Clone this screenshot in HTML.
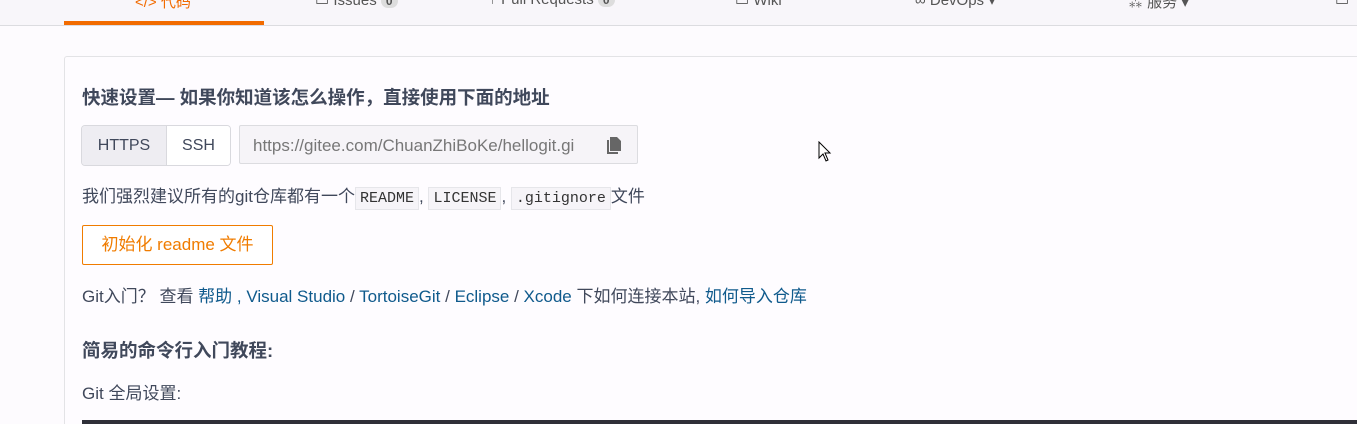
<!DOCTYPE html>
<html><head><meta charset="utf-8"><style>
html,body{margin:0;width:1357px;height:424px;overflow:hidden}
body{background:#fdfbfe;font-family:"Liberation Sans","Noto Sans CJK SC",sans-serif;color:#40485b;position:relative}
.nav{position:absolute;left:0;top:0;width:1357px;height:25px;background:#f8f6fa;border-bottom:1px solid #dcdce0}
.nav span{position:absolute;top:-9px;font-size:15px;color:#555}
.ul{position:absolute;left:64px;top:21px;width:200px;height:4px;background:#f26b00}
.card{position:absolute;left:64px;top:56px;width:1300px;height:368px;border-left:1px solid #e3e3e6;border-top:1px solid #e3e3e6;border-radius:3px 0 0 0;background:#fefcff}
.a{position:absolute;white-space:nowrap}
h{font-weight:bold;font-size:18.5px;color:#40485b}
.grp{position:absolute;left:81px;top:125px;width:148px;height:39px;border:1px solid #d9d9de;border-radius:4px;overflow:hidden;font-size:16px}
.grp div{position:absolute;top:0;height:39px;line-height:39px;text-align:center}
.inp{position:absolute;left:239px;top:125px;width:399px;height:39px;border:1px solid #dcdce0;border-radius:2px;background:#f6f4f8;font-size:17px;color:#777;line-height:39px;padding-left:13px;box-sizing:border-box}
code{font-family:"Liberation Mono",monospace;font-size:15px;background:#f6f4f8;border:1px solid #e6e6ea;padding:2px 4px;color:#333}
.btn{position:absolute;left:82px;top:225px;width:189px;height:38px;border:1px solid #f07c00;border-radius:2px;color:#f07c00;font-size:17px;line-height:38px;text-align:center;background:#fff}
.l{color:#0f5a8c}
</style></head><body>
<div class="nav">
<span style="left:135px;color:#f26b00">&lt;/&gt; 代码</span>
<span style="left:315px">▭ Issues <b style="background:#ddd;border-radius:8px;padding:0 5px;font-size:12px">0</b></span>
<span style="left:488px">⑂ Pull Requests <b style="background:#ddd;border-radius:8px;padding:0 5px;font-size:12px">0</b></span>
<span style="left:735px">▭ Wiki</span>
<span style="left:915px">∞ DevOps ▾</span>
<span style="left:1128px">⁂ 服务 ▾</span>
<span style="left:1335px">▭</span>
</div>
<div class="ul"></div>
<div class="card"></div>
<div class="a" style="left:82px;top:84px"><h>快速设置— 如果你知道该怎么操作，直接使用下面的地址</h></div>
<div class="grp"><div style="left:0;width:84px;background:#eeedf2;border-right:1px solid #d9d9de">HTTPS</div><div style="left:85px;width:63px;background:#fff">SSH</div></div>
<div class="inp">https://gitee.com/ChuanZhiBoKe/hellogit.gi<svg style="position:absolute;left:366px;top:11px" width="16" height="17" viewBox="0 0 16 17"><path d="M4 0h7l4 4v10H4z" fill="#666"/><path d="M1 3h2v12h9v2H1z" fill="#666"/></svg></div>
<div class="a" style="left:82px;top:182px;font-size:17px">我们强烈建议所有的git仓库都有一个<code>README</code>, <code>LICENSE</code>, <code>.gitignore</code>文件</div>
<div class="btn">初始化 readme 文件</div>
<div class="a" style="left:82px;top:282px;font-size:17px">Git入门？ 查看 <span class="l">帮助 , Visual Studio</span> / <span class="l">TortoiseGit</span> / <span class="l">Eclipse</span> / <span class="l">Xcode</span> 下如何连接本站, <span class="l">如何导入仓库</span></div>
<div class="a" style="left:82px;top:337px"><h>简易的命令行入门教程:</h></div>
<div class="a" style="left:82px;top:379px;font-size:17px">Git 全局设置:</div>
<div style="position:absolute;left:82px;top:420px;width:1275px;height:4px;background:#2f2f38"></div>
<svg style="position:absolute;left:818px;top:141px" width="14" height="22" viewBox="0 0 14 22"><path d="M1 1 L1 17 L5 13 L8 20 L10 19 L7 12 L12 12 Z" fill="#fff" stroke="#000" stroke-width="1"/></svg>
</body></html>
